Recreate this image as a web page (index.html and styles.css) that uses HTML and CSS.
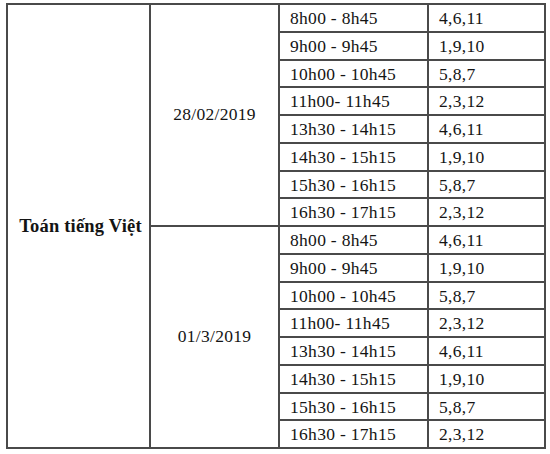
FILE: index.html
```html
<!DOCTYPE html>
<html lang="vi">
<head>
<meta charset="utf-8">
<title>Lịch thi</title>
<link rel="stylesheet" href="styles.css">
</head>
<body>
<table class="schedule">
  <colgroup>
    <col class="c-subject">
    <col class="c-date">
    <col class="c-time">
    <col class="c-code">
  </colgroup>
  <tbody>
    <tr><td class="subject" rowspan="16">Toán tiếng Việt</td><td class="date" rowspan="8">28/02/2019</td><td class="time">8h00 - 8h45</td><td class="code">4,6,11</td></tr>
    <tr><td class="time">9h00 - 9h45</td><td class="code">1,9,10</td></tr>
    <tr><td class="time">10h00 - 10h45</td><td class="code">5,8,7</td></tr>
    <tr><td class="time">11h00- 11h45</td><td class="code">2,3,12</td></tr>
    <tr><td class="time">13h30 - 14h15</td><td class="code">4,6,11</td></tr>
    <tr><td class="time">14h30 - 15h15</td><td class="code">1,9,10</td></tr>
    <tr><td class="time">15h30 - 16h15</td><td class="code">5,8,7</td></tr>
    <tr><td class="time">16h30 - 17h15</td><td class="code">2,3,12</td></tr>
    <tr><td class="date" rowspan="8">01/3/2019</td><td class="time">8h00 - 8h45</td><td class="code">4,6,11</td></tr>
    <tr><td class="time">9h00 - 9h45</td><td class="code">1,9,10</td></tr>
    <tr><td class="time">10h00 - 10h45</td><td class="code">5,8,7</td></tr>
    <tr><td class="time">11h00- 11h45</td><td class="code">2,3,12</td></tr>
    <tr><td class="time">13h30 - 14h15</td><td class="code">4,6,11</td></tr>
    <tr><td class="time">14h30 - 15h15</td><td class="code">1,9,10</td></tr>
    <tr><td class="time">15h30 - 16h15</td><td class="code">5,8,7</td></tr>
    <tr><td class="time">16h30 - 17h15</td><td class="code">2,3,12</td></tr>
  </tbody>
</table>
</body>
</html>
```

FILE: styles.css
```css
html, body {
  margin: 0;
  padding: 0;
  background: #ffffff;
}

body {
  padding: 3px 0 0 6px;
  font-family: "Liberation Serif", "Times New Roman", serif;
  color: #141414;
}

.schedule {
  border-collapse: collapse;
  table-layout: fixed;
  width: 538px;
  font-size: 17.5px;
  letter-spacing: 0.3px;
}

.c-subject { width: 143px; }
.c-date { width: 129px; }
.c-time { width: 149px; }
.c-code { width: 117px; }

.schedule td {
  border: 2px solid #4a4a4a;
  height: 23.75px;
  padding: 0 0 0 10px;
  vertical-align: middle;
  line-height: 1;
  white-space: nowrap;
}

.schedule td.subject {
  padding: 0 0 0 4px;
  text-align: center;
  font-weight: bold;
  font-size: 18.5px;
  letter-spacing: 0.2px;
}

.schedule td.date {
  padding: 0;
  text-align: center;
}

.schedule td.time,
.schedule td.code {
  padding-top: 2px;
}
```
